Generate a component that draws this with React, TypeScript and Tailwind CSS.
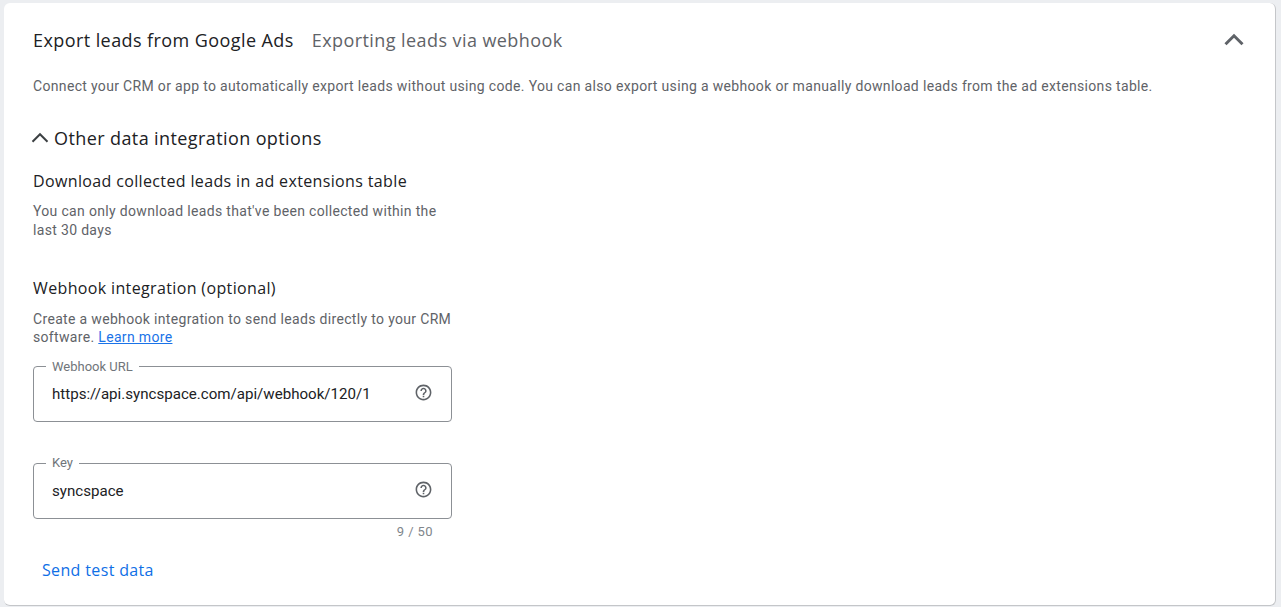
import React from 'react';

const heading = "font-['Open_Sans','Noto_Sans',sans-serif]";
const body = "font-['Roboto',sans-serif]";

function HelpIcon() {
  return (
    <svg className="w-[19px] h-[19px] mb-[3px] text-[#5f6368]" viewBox="0 0 24 24" fill="currentColor">
      <path d="M11 18h2v-2h-2v2zm1-16C6.48 2 2 6.48 2 12s4.48 10 10 10 10-4.48 10-10S17.52 2 12 2zm0 18c-4.41 0-8-3.59-8-8s3.59-8 8-8 8 3.59 8 8-3.59 8-8 8zm0-14c-2.21 0-4 1.79-4 4h2c0-1.1.9-2 2-2s2 .9 2 2c0 2-3 1.75-3 5h2c0-2.25 3-2.5 3-5 0-2.21-1.79-4-4-4z" />
    </svg>
  );
}

function Chevron({ className, weight }: { className: string; weight: number }) {
  return (
    <svg className={className} viewBox="0 0 24 24" fill="none" stroke="currentColor" strokeWidth={weight}>
      <path d="M6 15l6-6 6 6" />
    </svg>
  );
}

function OutlinedField({ label, value, labelClass }: { label: string; value: string; labelClass: string }) {
  return (
    <div className="relative w-[419px] h-[56px] border border-[#8c9095] rounded-[4px] flex items-center justify-between pl-[18px] pr-[18px]">
      <span className={`absolute left-[12px] bg-white px-[6px] text-[13px] leading-[14px] text-[#70757a] ${labelClass} ${body}`}>{label}</span>
      <span className={`text-[15.1px] text-[#202124] ${body}`}>{value}</span>
      <HelpIcon />
    </div>
  );
}

export default function App() {
  return (
    <div className="w-[1281px] h-[607px] overflow-hidden bg-[#eceef1] pt-[3px] pl-[4px] pr-[4px]">
      <div className="w-[1272px] h-[603px] bg-white rounded-[6px] border-r border-b border-[#c4c6c9] pl-[29px]">
        <div className="flex items-center justify-between h-[74px] pr-[24px]">
          <div className={`flex items-center gap-[18px] text-[18px] tracking-[0.42px] ${heading}`}>
            <span className="text-[#202124]">Export leads from Google Ads</span>
            <span className="text-[#5f6368]">Exporting leads via webhook</span>
          </div>
          <Chevron className="w-[34px] h-[34px] -mt-[1px] text-[#5f6368]" weight={2.1} />
        </div>
        <p className={`text-[14px] leading-[18px] tracking-[0.33px] text-[#5f6368] whitespace-nowrap ${body}`}>
          Connect your CRM or app to automatically export leads without using code. You can also export using a webhook or manually download leads from the ad extensions table.
        </p>
        <div className="flex items-center mt-[28px] -ml-[8px]">
          <Chevron className="w-[30px] h-[30px] text-[#3c4043]" weight={1.6} />
          <span className={`-ml-[1px] text-[18px] leading-[24px] tracking-[0.4px] text-[#202124] ${heading}`}>Other data integration options</span>
        </div>
        <h3 className={`mt-[18px] text-[16px] leading-[20px] tracking-[0.36px] text-[#202124] ${heading}`}>Download collected leads in ad extensions table</h3>
        <p className={`mt-[11px] w-[410px] text-[14px] leading-[19px] tracking-[0.33px] text-[#5f6368] ${body}`}>
          You can only download leads that've been collected within the last 30 days
        </p>
        <h3 className={`mt-[38px] text-[16px] leading-[20px] tracking-[0.36px] text-[#202124] ${heading}`}>Webhook integration (optional)</h3>
        <p className={`mt-[12px] w-[425px] text-[14px] leading-[18px] tracking-[0.33px] text-[#5f6368] ${body}`}>
          Create a webhook integration to send leads directly to your CRM software. <a className="text-[#1a73e8] underline">Learn more</a>
        </p>
        <div className="mt-[20px]">
          <OutlinedField label="Webhook URL" value="https://api.syncspace.com/api/webhook/120/1" labelClass="-top-[7px]" />
        </div>
        <div className="mt-[41px]">
          <OutlinedField label="Key" value="syncspace" labelClass="-top-[8px]" />
        </div>
        <div className={`w-[400px] mt-[5px] text-right text-[13px] leading-[16px] tracking-[0.4px] text-[#80868b] ${body}`}>9 / 50</div>
        <div className={`mt-[20px] ml-[9px] text-[16px] leading-[20px] tracking-[0.35px] text-[#0f6fe6] ${heading}`}>Send test data</div>
      </div>
    </div>
  );
}
